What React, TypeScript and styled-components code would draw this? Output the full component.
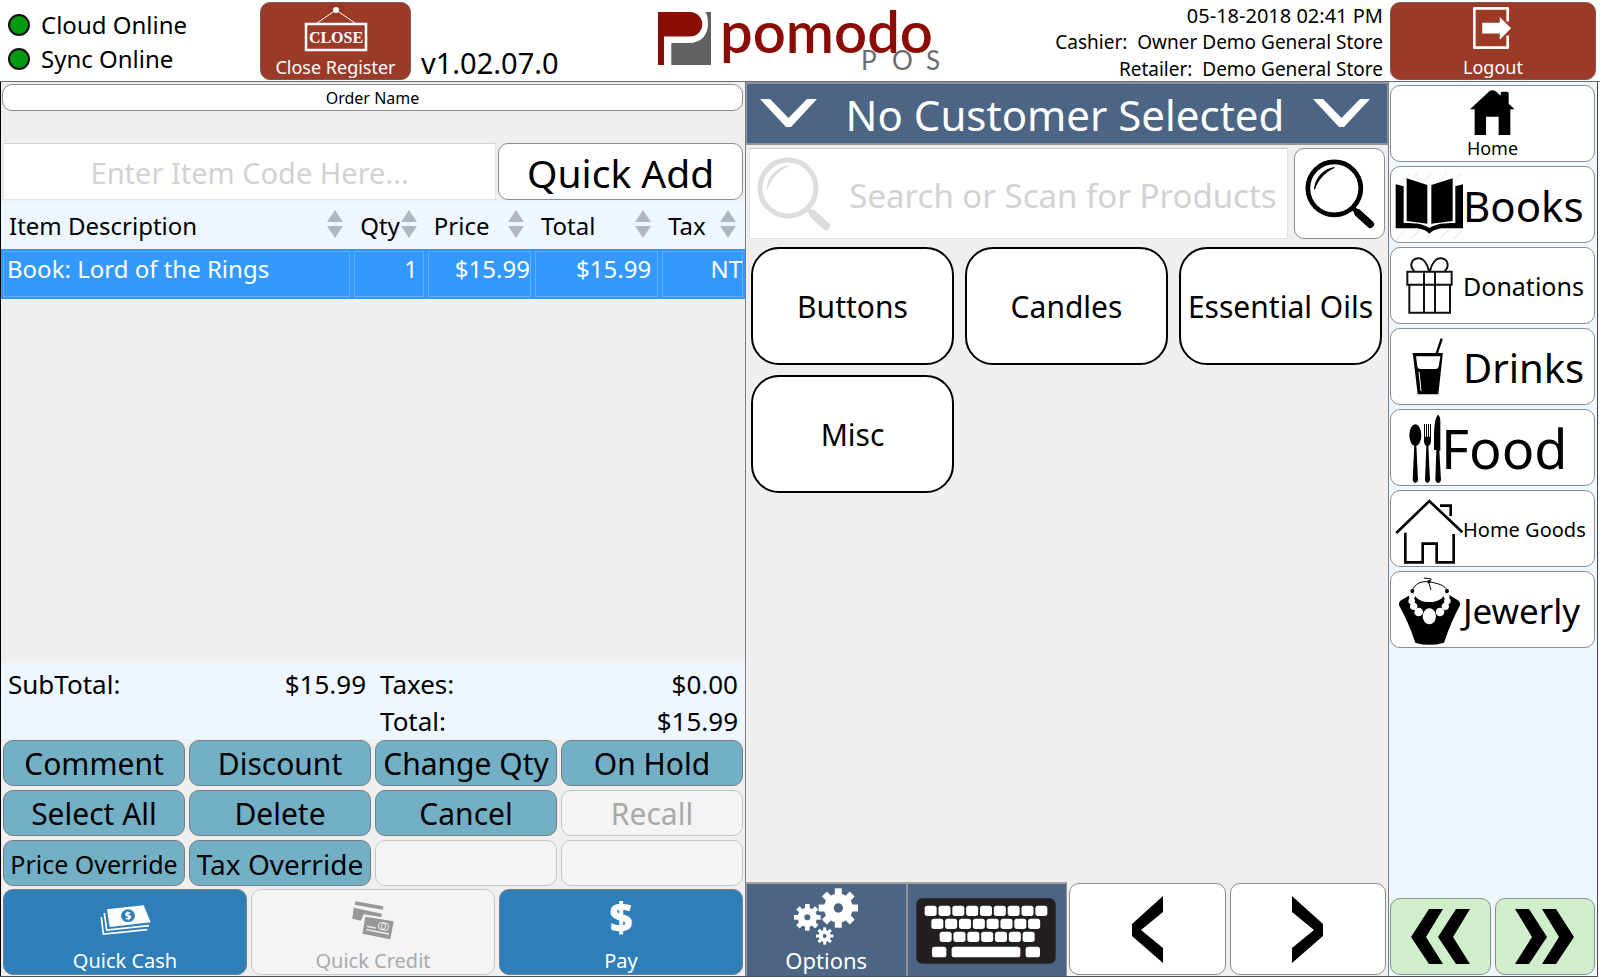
import React from 'react';
import styled, { createGlobalStyle, css } from 'styled-components';

const GlobalStyle = createGlobalStyle`
  *, *::before, *::after { box-sizing: border-box; }
  body { margin: 0; background: #fff; color: #000; }
  body, button, input { font-family: "Noto Sans", "Open Sans", sans-serif; }
  button { cursor: pointer; padding: 0; margin: 0; }
  svg { display: block; flex: none; overflow: visible; }
`;

const slate = '#4c6584';
const mist = '#eef7ff';

const Page = styled.div`
  display: flex;
  flex-direction: column;
  min-height: 100vh;
`;

/* ---------- Header ---------- */

const Header = styled.header`
  display: grid;
  grid-template-columns: minmax(0, 1fr) auto minmax(0, 1fr);
  height: 82px;
  border-bottom: 1px solid #6c6c6c;
`;

const HeaderSide = styled.div<{ $end?: boolean }>`
  display: flex;
  justify-content: ${(p) => (p.$end ? 'flex-end' : 'flex-start')};
  white-space: nowrap;
`;

const StatusList = styled.ul`
  list-style: none;
  margin: 0;
  padding: 8px 0 0 8px;
  width: 260px;
`;

const Status = styled.li`
  display: flex;
  align-items: center;
  gap: 11px;
  font-size: 24px;
  line-height: 34px;
`;

const Dot = styled.span`
  width: 22px;
  height: 22px;
  border-radius: 50%;
  border: 2px solid #111;
  background: #009a11;
`;

const RedButton = styled.button<{ $width: number }>`
  display: flex;
  flex-direction: column;
  align-items: center;
  justify-content: space-between;
  width: ${(p) => p.$width}px;
  height: 78px;
  margin-top: 2px;
  padding: 3px 0 0;
  border: 1px solid #7c5a54;
  border-radius: 10px;
  background: #9c3a28;
  color: #fff;
  font-size: 18px;
  line-height: 24px;
`;

const Version = styled.span`
  align-self: flex-end;
  margin-left: 10px;
  font-size: 29px;
  line-height: 40px;
`;

const Meta = styled.div`
  margin: 2px 7px 0 0;
  text-align: right;
  font-size: 19px;
  line-height: 27px;
  white-space: pre;
`;

const Clock = styled.time`
  display: block;
  font-size: 20px;
`;

const LogoutSlot = styled.div`
  margin-right: 4px;
`;

/* ---------- Body ---------- */

const Body = styled.main`
  flex: 1;
  display: grid;
  grid-template-columns: minmax(0, 746fr) minmax(0, 643fr) minmax(0, 209fr);
  margin-right: 2px;
  border-bottom: 1px solid #4b5560;
`;

const Panel = styled.section`
  display: flex;
  flex-direction: column;
  background: #efefef;
  border-right: 1px solid #7d7d82;
`;

const OrderPanel = styled(Panel)`
  border-left: 1px solid #000;
`;

const CategoryPanel = styled.nav`
  display: flex;
  flex-direction: column;
  gap: 4px;
  padding: 3px 2px 1px 1px;
  background: ${mist};
  border-right: 1px solid #444;
`;

const outlined = css`
  border: 1px solid #8c8c8c;
  border-radius: 10px;
  background: #fff;
  color: #000;
`;

const OrderName = styled.button`
  ${outlined}
  height: 27px;
  margin: 2px 2px 32px 1px;
  font-size: 16px;
  line-height: 24px;
`;

const EntryRow = styled.form`
  display: grid;
  grid-template-columns: minmax(0, 494fr) minmax(0, 245fr);
  gap: 2px;
  height: 57px;
  margin: 0 2px 1px 2px;
`;

const CodeInput = styled.input`
  width: 100%;
  padding: 2px 0 0;
  border: 1px solid #e4e4e8;
  border-top-color: #cfcfd4;
  border-radius: 0;
  background: #fff;
  text-align: center;
  font-size: 29px;
  &::placeholder { color: #d2d2d2; opacity: 1; }
`;

const QuickAdd = styled.button`
  ${outlined}
  padding-top: 2px;
  font-size: 39px;
  line-height: 52px;
`;

const OrderTable = styled.table`
  width: 100%;
  table-layout: fixed;
  border-collapse: collapse;
  font-size: 24px;
`;

const HeadCell = styled.th<{ $share: number }>`
  width: ${(p) => p.$share}%;
  height: 48px;
  padding: 0;
  background: ${mist};
  font-weight: 400;
`;

const SortButton = styled.button`
  display: flex;
  align-items: center;
  justify-content: space-between;
  width: 100%;
  padding: 1px 9px 0 8px;
  border: 0;
  background: none;
  font-size: 24px;
  line-height: 36px;
  white-space: nowrap;
`;

const SelectedRow = styled.tr`
  background: #3399ff;
  color: #fff;
`;

const Cell = styled.td<{ $right?: number }>`
  height: 50px;
  padding: 4px ${(p) => p.$right ?? 0}px 0 6px;
  vertical-align: top;
  line-height: 32px;
  white-space: nowrap;
  text-align: ${(p) => (p.$right === undefined ? 'left' : 'right')};
  outline: 1px solid rgba(255, 255, 255, 0.22);
  outline-offset: -3px;
`;

const Totals = styled.dl`
  display: grid;
  grid-template-columns: 1fr 1fr;
  margin: auto 0 0;
  padding: 3px 7px 0;
  height: 76px;
  column-gap: 14px;
  background: ${mist};
  font-size: 26px;
  line-height: 37px;
`;

const TotalLine = styled.div<{ $second?: boolean }>`
  display: flex;
  justify-content: space-between;
  grid-column: ${(p) => (p.$second ? 2 : 'auto')};
  dd { margin: 0; }
`;

const ActionGrid = styled.div<{ $columns: number; $row: number }>`
  display: grid;
  grid-template-columns: repeat(${(p) => p.$columns}, minmax(0, 1fr));
  grid-auto-rows: ${(p) => p.$row}px;
  gap: 4px;
  padding: 1px 2px 0;
`;

const PayGrid = styled(ActionGrid)`
  padding-top: 3px;
  padding-bottom: 1px;
`;

const ActionButton = styled.button<{ $size?: number }>`
  padding-top: 2px;
  border: 1px solid #777f82;
  border-radius: 10px;
  background: #73b0c6;
  color: #000;
  font-size: ${(p) => p.$size ?? 30}px;
  line-height: 40px;
  white-space: nowrap;
  &:disabled {
    border-color: #c4c7c9;
    background: #f4f4f4;
    color: #a9a9a9;
  }
`;

const PayButton = styled(ActionButton)`
  display: flex;
  flex-direction: column;
  align-items: center;
  justify-content: space-between;
  padding-top: 11px;
  background: #307eb8;
  color: #fff;
  font-size: 20px;
  line-height: 26px;
`;

/* ---------- Products ---------- */

const CustomerBar = styled.button`
  display: flex;
  align-items: center;
  justify-content: space-between;
  height: 63px;
  padding: 2px 17px 0 13px;
  border: 2px solid #8e949c;
  border-width: 2px 1px;
  background: ${slate};
  color: #fff;
  font-size: 42px;
  line-height: 56px;
  white-space: nowrap;
`;

const SearchRow = styled.form`
  display: grid;
  grid-template-columns: minmax(0, 1fr) 91px;
  gap: 6px;
  height: 91px;
  margin: 3px 3px 0;
`;

const SearchField = styled.label`
  display: flex;
  align-items: center;
  padding-left: 7px;
  border: 1px solid #e0e0e6;
  border-top-color: #c6c6cc;
  background: #fff;
`;

const SearchInput = styled(CodeInput)`
  flex: 1;
  min-width: 0;
  height: 100%;
  padding: 4px 0 0 8px;
  border: 0;
  font-size: 33px;
  outline-offset: -2px;
`;

const SearchButton = styled.button`
  ${outlined}
  display: grid;
  place-items: center;
`;

const ProductGrid = styled.div`
  display: grid;
  grid-template-columns: repeat(3, minmax(0, 1fr));
  grid-auto-rows: 118px;
  gap: 10px 11px;
  padding: 8px 6px 8px 5px;
`;

const ProductTile = styled.button`
  padding-top: 2px;
  border: 2px solid #000;
  border-radius: 28px;
  background: #fff;
  color: #000;
  font-size: 30px;
  line-height: 40px;
  white-space: nowrap;
`;

const BottomBar = styled.div`
  display: grid;
  grid-template-columns: repeat(4, minmax(0, 1fr));
  height: 94px;
  margin-top: auto;
`;

const SlateButton = styled.button`
  display: flex;
  flex-direction: column;
  align-items: center;
  justify-content: center;
  padding-top: 2px;
  border: 1px solid #8e949c;
  border-top: 2px solid #a5a5a5;
  border-bottom: 0;
  background: ${slate};
  color: #fff;
  font-size: 22px;
  line-height: 30px;
`;

const PageButton = styled.button`
  ${outlined}
  display: grid;
  place-items: center;
  margin: 1px 2px;
`;

/* ---------- Categories ---------- */

const HomeButton = styled.button`
  ${outlined}
  display: flex;
  flex-direction: column;
  align-items: center;
  justify-content: space-between;
  height: 77px;
  padding: 4px 0 1px;
  font-size: 18px;
  line-height: 24px;
`;

const CategoryButton = styled.button<{ $size: number }>`
  ${outlined}
  display: flex;
  align-items: center;
  height: 77px;
  padding: 2px 0 0 4px;
  font-size: ${(p) => p.$size}px;
  line-height: 75px;
  white-space: nowrap;
`;

const ScrollRow = styled.div`
  display: grid;
  grid-template-columns: 1fr 1fr;
  gap: 4px;
  height: 77px;
  margin-top: auto;
`;

const ScrollButton = styled.button`
  ${outlined}
  display: grid;
  place-items: center;
  background: #d0eecb;
`;

/* ---------- Drawings ---------- */

const Logo = () => (
  <svg width="284" height="81" viewBox="658 0 284 81" role="img" aria-label="Pomodo POS">
    <path d="M658 12H690A12 12 0 0 1 690 36.500H664V65H658Z" fill="#8b0c04" />
    <path d="M705.500 12H711V65H671.300V43H689C701 43 708 35 708 24C708 18 707 15 705.500 12Z" fill="#606163" />
    <text x="720" y="53" fontFamily="Lato" fontWeight="600" fontSize="58" fill="#8b0c04">pomodo</text>
    <text x="861 892 926" y="70" fontFamily="Lato" fontSize="26" fill="#6b6b6b">POS</text>
  </svg>
);

const CloseSign = () => (
  <svg width="64" height="46" viewBox="303 5 64 46" aria-hidden="true">
    <path d="M316 22L335 9L354 22" fill="none" stroke="#fff" strokeWidth="1" />
    <circle cx="335" cy="9" r="3" fill="#fff" />
    <rect x="305" y="23" width="60" height="26" fill="none" stroke="#fff" strokeWidth="2.500" />
    <text x="335" y="42" textAnchor="middle" fontFamily="Liberation Serif" fontWeight="700" fontSize="16" fill="#fff">CLOSE</text>
  </svg>
);

const LogoutIcon = () => (
  <svg width="41" height="44" viewBox="272 15 122 133" fill="none" aria-hidden="true">
    <path d="M376 62V22H275V141H376V104" stroke="#fff" strokeWidth="8" strokeLinejoin="round" />
    <path d="M299 66H352V48L386 82L352 117V98H299Z" fill="#fff" />
  </svg>
);

const SortIcon = () => (
  <svg width="16" height="28" viewBox="0 0 16 28" fill="#b2b6bd" aria-hidden="true">
    <path d="M8 -2L16 10H0ZM0 14H16L8 26Z" />
  </svg>
);

const CashIcon = () => (
  <svg width="51" height="39" viewBox="62 60 153 117" aria-hidden="true">
    <path d="M83 85L193 73L214 124L91 138Z" fill="#fff" />
    <path d="M75 96L82 147L209 134M66 108L72 159L204 146" fill="none" stroke="#fff" strokeWidth="5" />
    <ellipse cx="146" cy="104" rx="21" ry="19" fill="#307eb8" />
    <text x="146" y="116" textAnchor="middle" fontFamily="Noto Sans" fontWeight="800" fontSize="32" fill="#fff" transform="rotate(-8 146 104)">$</text>
  </svg>
);

const CardsIcon = () => (
  <svg width="42" height="39" viewBox="817 58 126 117" fill="#979797" aria-hidden="true">
    <path d="M828 59L911 74L909 84L825 69ZM822 78L907 96L905 106L852 98L844 117L818 111Z" />
    <path d="M857 105L942 119L932 173L848 156Z" />
    <g fill="none" stroke="#f4f4f4" strokeWidth="3">
      <ellipse cx="907" cy="133" rx="11" ry="11" />
      <ellipse cx="916" cy="135" rx="11" ry="11" />
      <path d="M862 134L888 139M860 144L928 157" strokeWidth="4" />
    </g>
  </svg>
);

const DollarIcon = () => (
  <svg width="30" height="39" viewBox="0 0 30 39" aria-hidden="true">
    <text x="15" y="31" textAnchor="middle" fontFamily="Noto Sans" fontWeight="900" fontSize="40" fill="#fff">$</text>
  </svg>
);

const WideChevron = () => (
  <svg width="57" height="32" viewBox="0 0 57 32" fill="#fff" aria-hidden="true">
    <path d="M0 0H10L28.500 19L47 0H57L31 28H26Z" />
  </svg>
);

const Magnifier = ({ size, color }: { size: number; color: string }) => (
  <svg width={size} height={size} viewBox="0 0 74 74" fill="none" stroke={color} aria-hidden="true">
    <circle cx="31" cy="31" r="28" strokeWidth="5" />
    <path d="M10 32C11 20 19 11 31 9C21 14 14 21 10 32Z" fill={color} strokeWidth="1" />
    <path d="M50 51L56 57" strokeWidth="5" />
    <path d="M56 57L69 69" strokeWidth="8" strokeLinecap="round" />
  </svg>
);

type GearProps = { x: number; y: number; outer: number; body: number; hole: number; tooth: number };
const Gear = ({ x, y, outer, body, hole, tooth }: GearProps) => (
  <g transform={`translate(${x} ${y})`}>
    {[0, 45, 90, 135].map((a) => (
      <rect key={a} x={-tooth / 2} y={-outer} width={tooth} height={outer * 2} transform={`rotate(${a})`} />
    ))}
    <circle r={body} />
    <circle r={hole} fill={slate} />
  </g>
);

const GearsIcon = () => (
  <svg width="64" height="57" viewBox="162 48 192 171" fill="#fff" aria-hidden="true">
    <Gear x={295} y={108} outer={59} body={43} hole={14} tooth={21} />
    <Gear x={202} y={136} outer={40} body={29} hole={9} tooth={14} />
    <Gear x={254} y={192} outer={26} body={18} hole={6} tooth={9} />
  </svg>
);

const keyRows = [
  { x: 553, y: 106, count: 9 },
  { x: 573, y: 145, count: 8 },
  { x: 598, y: 184, count: 7 },
];

const KeyboardIcon = () => (
  <svg width="140" height="66" viewBox="530 83 420 198" fill="#fff" aria-hidden="true">
    <rect x="528" y="84" width="418" height="196" rx="18" fill="#231f20" />
    {keyRows.flatMap((row) =>
      Array.from({ length: row.count }, (_, i) => (
        <rect key={`${row.y}-${i}`} x={row.x + i * 41.5} y={row.y} width="36" height="31" rx="8" />
      )),
    )}
    <rect x="575" y="229" width="43" height="32" rx="8" />
    <rect x="634" y="229" width="206" height="32" rx="8" />
    <rect x="856" y="229" width="43" height="32" rx="8" />
  </svg>
);

const Angle = ({ flip }: { flip?: boolean }) => (
  <svg width="31" height="67" viewBox="0 0 31 67" aria-hidden="true">
    <path d="M31 0V16L9 34L31 52V67L0 40V28Z" transform={flip ? 'matrix(-1 0 0 1 31 0)' : undefined} />
  </svg>
);

const DoubleAngle = ({ flip }: { flip?: boolean }) => (
  <svg width="59" height="55" viewBox="0 0 59 55" aria-hidden="true">
    <path
      d="M18 0H32L15 28L32 55H18L0 28ZM45 0H59L42 28L59 55H45L27 28Z"
      transform={flip ? 'matrix(-1 0 0 1 59 0)' : undefined}
    />
  </svg>
);

const HomeIcon = () => (
  <svg width="45" height="45" viewBox="271 268 135 135" aria-hidden="true">
    <path d="M271 326L329 272Q339 265 348 272L363 285V277Q364 273 368 273H382Q387 273 387 278V309L405 326H392V403H357V348H319V403H285V326Z" />
  </svg>
);

const BookIcon = () => (
  <svg width="68" height="68" viewBox="45 31 204 204" aria-hidden="true">
    <path d="M50 75L90 35M100 48L112 35M132 58L155 35M180 58L200 36M222 58L246 36M50 232L78 204M92 232L118 206M135 232L152 216M178 232L208 203M220 232L246 206" stroke="#efefef" strokeWidth="5" />
    <path d="M80 50L142 70V186L80 178ZM218 50L154 70V186L218 178Z" />
    <path d="M47 68L71 74V184C108 184 128 186 148 199C170 186 190 184 226 184V74L249 68V200H185Q162 203 148 216Q134 203 112 200H47Z" />
  </svg>
);

const GiftIcon = () => (
  <svg width="68" height="68" viewBox="45 275 204 204" fill="none" stroke="#111" strokeWidth="6" aria-hidden="true">
    <path d="M82 331H215V370H82ZM88 370V454H210V370M132 331V454M165 331V454" />
    <path d="M147 329C141 304 128 290 114 291C92 293 88 316 103 329M150 329C156 304 169 290 183 291C205 293 209 316 194 329" />
  </svg>
);

const DrinkIcon = () => (
  <svg width="68" height="68" viewBox="45 519 204 204" aria-hidden="true">
    <path d="M97 576H188V582L175 700H113L99 582Z" />
    <path d="M108 586H181L176 617Q174 624 167 624H121Q114 624 112 617Z" fill="#fff" />
    <path d="M117 632L123 690" stroke="#fff" strokeWidth="3" />
    <path d="M185 533L170 578" stroke="#000" strokeWidth="7" />
  </svg>
);

const CutleryIcon = () => (
  <svg width="46" height="68" viewBox="45 43 138 204" aria-hidden="true">
    <ellipse cx="106" cy="104" rx="18" ry="33" />
    <path d="M103 132H109L114 238Q112 247 106 247Q100 247 98 238Z" />
    <path d="M132 70V120Q132 132 139 136L135 238Q137 247 142 247Q148 247 150 238L145 136Q153 132 153 120V70H150V108H147V70H144V108H141V70H138V108H135V70Z" />
    <path d="M181 150V60Q180 43 173 43Q163 55 162 100V148H169L166 238Q168 247 174 247Q181 247 183 238L178 150Z" />
  </svg>
);

const HouseIcon = () => (
  <svg width="68" height="68" viewBox="45 288 204 204" fill="none" stroke="#000" strokeWidth="8" aria-hidden="true">
    <path d="M49 399L148 303L247 397" />
    <path d="M76 398V487H128V431H170V487H221V402M180 317H212V348" />
  </svg>
);

const beads = [
  [96, 588, 9], [95, 603, 10], [101, 619, 11], [116, 636, 13],
  [200, 588, 9], [202, 603, 10], [196, 619, 11], [180, 636, 13],
];

const NecklaceIcon = () => (
  <svg width="68" height="68" viewBox="45 531 204 204" aria-hidden="true">
    <path d="M97 572Q108 606 148 606Q188 606 200 572L208 585L236 602Q241 607 240 616Q214 664 192 728Q148 741 106 728Q84 664 57 616Q56 607 61 602L90 585Z" />
    <g fill="#fff">
      {beads.map(([x, y, r]) => (
        <circle key={`${x}-${y}`} cx={x} cy={y} r={r} />
      ))}
      <ellipse cx="148" cy="649" rx="20" ry="24" />
    </g>
    <circle cx="97" cy="573" r="6" />
    <circle cx="201" cy="573" r="6" />
    <path d="M97 572C104 550 124 543 148 545C178 552 196 556 201 572M132 534L154 537L146 547L153 570" fill="none" stroke="#000" strokeWidth="3" />
    <circle cx="147" cy="545" r="5" />
  </svg>
);

/* ---------- Data ---------- */

const columns = [
  { label: 'Item Description', share: 47.2 },
  { label: 'Qty', share: 9.9 },
  { label: 'Price', share: 14.4 },
  { label: 'Total', share: 17.1 },
  { label: 'Tax', share: 11.4 },
];

const actions: { label: string; size?: number; disabled?: boolean }[] = [
  { label: 'Comment' },
  { label: 'Discount' },
  { label: 'Change Qty' },
  { label: 'On Hold' },
  { label: 'Select All' },
  { label: 'Delete' },
  { label: 'Cancel' },
  { label: 'Recall', disabled: true },
  { label: 'Price Override', size: 25 },
  { label: 'Tax Override', size: 28 },
  { label: '', disabled: true },
  { label: '', disabled: true },
];

const categories = [
  { label: 'Books', size: 42, Icon: BookIcon },
  { label: 'Donations', size: 25, Icon: GiftIcon },
  { label: 'Drinks', size: 40, Icon: DrinkIcon },
  { label: 'Food', size: 54, Icon: CutleryIcon },
  { label: 'Home Goods', size: 20, Icon: HouseIcon },
  { label: 'Jewerly', size: 35, Icon: NecklaceIcon },
];

const hold = (e: React.FormEvent) => e.preventDefault();

export default function App() {
  return (
    <Page>
      <GlobalStyle />
      <Header>
        <HeaderSide>
          <StatusList>
            <Status><Dot />Cloud Online</Status>
            <Status><Dot />Sync Online</Status>
          </StatusList>
          <RedButton $width={151}><CloseSign />Close Register</RedButton>
          <Version>v1.02.07.0</Version>
        </HeaderSide>
        <Logo />
        <HeaderSide $end>
          <Meta>
            <Clock>05-18-2018 02:41 PM</Clock>
            <div>{'Cashier:  Owner Demo General Store'}</div>
            <div>{'Retailer:  Demo General Store'}</div>
          </Meta>
          <LogoutSlot>
            <RedButton $width={206}><LogoutIcon />Logout</RedButton>
          </LogoutSlot>
        </HeaderSide>
      </Header>

      <Body>
        <OrderPanel>
          <OrderName>Order Name</OrderName>
          <EntryRow onSubmit={hold}>
            <CodeInput aria-label="Item code" placeholder="Enter Item Code Here..." />
            <QuickAdd>Quick Add</QuickAdd>
          </EntryRow>
          <OrderTable>
            <thead>
              <tr>
                {columns.map((c) => (
                  <HeadCell key={c.label} $share={c.share} scope="col">
                    <SortButton>{c.label}<SortIcon /></SortButton>
                  </HeadCell>
                ))}
              </tr>
            </thead>
            <tbody>
              <SelectedRow>
                <Cell>Book: Lord of the Rings</Cell>
                <Cell $right={8}>1</Cell>
                <Cell $right={3}>$15.99</Cell>
                <Cell $right={9}>$15.99</Cell>
                <Cell $right={3}>NT</Cell>
              </SelectedRow>
            </tbody>
          </OrderTable>
          <Totals>
            <TotalLine><dt>SubTotal:</dt><dd>$15.99</dd></TotalLine>
            <TotalLine><dt>Taxes:</dt><dd>$0.00</dd></TotalLine>
            <TotalLine $second><dt>Total:</dt><dd>$15.99</dd></TotalLine>
          </Totals>
          <ActionGrid $columns={4} $row={46}>
            {actions.map((a, i) => (
              <ActionButton key={i} $size={a.size} disabled={a.disabled} aria-label={a.label || 'Unassigned'}>
                {a.label}
              </ActionButton>
            ))}
          </ActionGrid>
          <PayGrid $columns={3} $row={86}>
            <PayButton $size={20}><CashIcon />Quick Cash</PayButton>
            <PayButton $size={20} disabled><CardsIcon />Quick Credit</PayButton>
            <PayButton $size={20}><DollarIcon />Pay</PayButton>
          </PayGrid>
        </OrderPanel>

        <Panel>
          <CustomerBar><WideChevron />No Customer Selected<WideChevron /></CustomerBar>
          <SearchRow onSubmit={hold}>
            <SearchField>
              <Magnifier size={74} color="#dcdcdc" />
              <SearchInput aria-label="Search products" placeholder="Search or Scan for Products" />
            </SearchField>
            <SearchButton aria-label="Search"><Magnifier size={70} color="#000" /></SearchButton>
          </SearchRow>
          <ProductGrid>
            <ProductTile>Buttons</ProductTile>
            <ProductTile>Candles</ProductTile>
            <ProductTile>Essential Oils</ProductTile>
            <ProductTile>Misc</ProductTile>
          </ProductGrid>
          <BottomBar>
            <SlateButton><GearsIcon />Options</SlateButton>
            <SlateButton aria-label="Keyboard"><KeyboardIcon /></SlateButton>
            <PageButton aria-label="Previous page"><Angle /></PageButton>
            <PageButton aria-label="Next page"><Angle flip /></PageButton>
          </BottomBar>
        </Panel>

        <CategoryPanel>
          <HomeButton><HomeIcon />Home</HomeButton>
          {categories.map(({ label, size, Icon }) => (
            <CategoryButton key={label} $size={size}><Icon />{label}</CategoryButton>
          ))}
          <ScrollRow>
            <ScrollButton aria-label="Previous categories"><DoubleAngle /></ScrollButton>
            <ScrollButton aria-label="Next categories"><DoubleAngle flip /></ScrollButton>
          </ScrollRow>
        </CategoryPanel>
      </Body>
    </Page>
  );
}
